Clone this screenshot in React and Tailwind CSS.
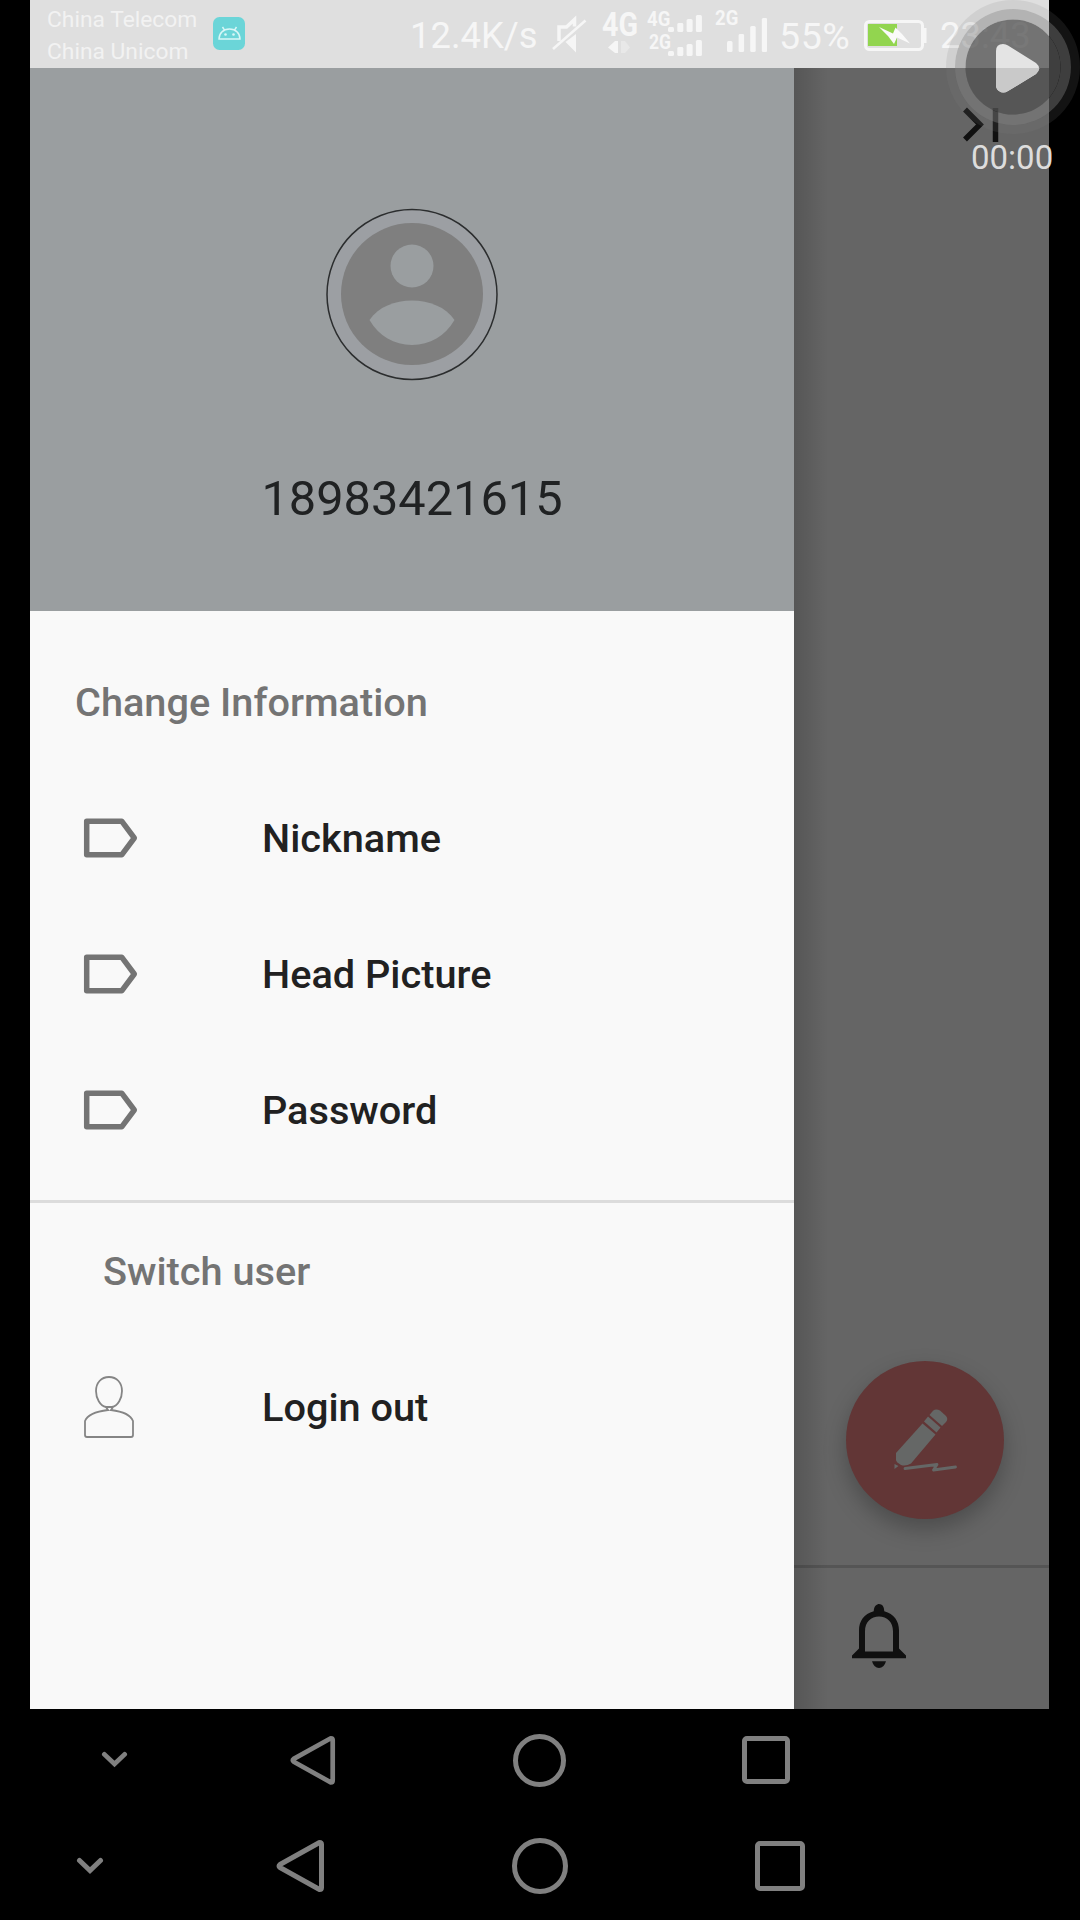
function SignalBars({ className, heights, barWidth, step, height }) {
  const width = step * (heights.length - 1) + barWidth;
  return (
    <svg className={className} width={width} height={height} viewBox={`0 0 ${width} ${height}`} fill="#f6f6f6">
      {heights.map((h, i) => (
        <rect key={i} x={i * step} y={height - h} width={barWidth} height={h} rx="1.5" />
      ))}
    </svg>
  );
}

function StatusBar() {
  return (
    <header className="flex h-[68px] shrink-0 items-start overflow-hidden bg-[#dfdfdf] whitespace-nowrap text-[#f6f6f6]">
      <div className="ml-[17px] w-[166px] shrink-0 pt-[4px] text-[22.800px] leading-[31.5px] text-[#f2f2f2]">
        <div>China Telecom</div>
        <div>China Unicom</div>
      </div>
      <svg className="mt-[17px] shrink-0" width="32" height="33" viewBox="0 0 32 33">
        <rect width="32" height="33" rx="6.5" fill="#6bd5d8" />
        <path d="M6 22c0-5.500 4-10 10.500-10s10.500 4.500 10.500 10zM11.500 13.200L9.500 10M21.500 13.200L23.500 10" fill="none" stroke="#d9f7f7" strokeWidth="1.500" />
        <circle cx="12.500" cy="17.500" r="1.300" fill="#d9f7f7" />
        <circle cx="20.500" cy="17.500" r="1.300" fill="#d9f7f7" />
      </svg>
      <div className="ml-[165px] w-[142px] shrink-0 pt-[15px] text-[36.400px] leading-[42px]">12.4K/s</div>
      <svg className="mt-[15px] shrink-0" width="36" height="38" viewBox="0 0 36 38">
        <path d="M7 26V12h7.500L22.500 4.500v7" fill="none" stroke="#f6f6f6" strokeWidth="3.500" />
        <path d="M13.500 27L24 19v18.500z" fill="#f6f6f6" />
        <path d="M1 34L33.500 5.500" stroke="#f6f6f6" strokeWidth="2.600" />
      </svg>
      <div className="ml-[14px] flex w-[44px] shrink-0 flex-col pt-[8px]">
        <span className="origin-left scale-x-[0.87] text-[33px] leading-[34px] font-bold">4G</span>
        <svg className="-mt-[2px] ml-[6px]" width="22" height="14" viewBox="0 0 22 14">
          <path d="M0 7.500L7 1h3v12H7z" fill="#f6f6f6" />
          <path d="M22 7.500L17 1h-4v12h4z" fill="#e8e8e8" />
        </svg>
      </div>
      <div className="flex w-[68px] shrink-0 flex-col pt-[9px]">
        <div className="flex h-[23px]">
          <span className="ml-[1px] w-[21px] origin-left scale-x-95 text-[19.500px] leading-[21px] font-bold">4G</span>
          <SignalBars className="mt-[6px]" heights={[5, 9, 13, 17]} barWidth={6} step={9.3} height={17} />
        </div>
        <div className="flex h-[24px]">
          <span className="ml-[3px] w-[19px] origin-left scale-x-90 text-[19.500px] leading-[21px] font-bold">2G</span>
          <SignalBars className="mt-[7px]" heights={[5, 9, 12, 16]} barWidth={6} step={9.3} height={17} />
        </div>
      </div>
      <div className="flex w-[64px] shrink-0 pt-[8px]">
        <span className="ml-[1px] w-[12px] origin-left scale-x-95 text-[19.500px] leading-[22px] font-bold">2G</span>
        <SignalBars className="mt-[10px]" heights={[11, 18, 26, 34]} barWidth={5.5} step={11.6} height={34} />
      </div>
      <div className="ml-[1px] w-[85px] shrink-0 pt-[15px] text-[37.500px] leading-[42px] tracking-[0.600px]">55%</div>
      <svg className="mt-[20px] shrink-0" width="63" height="31" viewBox="0 0 63 31">
        <rect x="1.500" y="1.500" width="57" height="28" rx="4" fill="none" stroke="#f6f6f6" strokeWidth="3" />
        <path d="M60 8h2.500v15H60z" fill="#f6f6f6" />
        <path d="M4 4h29v22H4z" fill="#92d54f" />
        <path d="M15 7l14 6.500 2.500-6L38 14l8 9.500-13-6-3 6.500-6-8z" fill="#fafafa" />
      </svg>
      <div className="ml-[13px] shrink-0 pt-[15px] text-[36.400px] leading-[42px]">23:43</div>
    </header>
  );
}

function Avatar() {
  return (
    <svg className="mt-[140px]" width="172" height="173" viewBox="0 0 172 173">
      <circle cx="86" cy="86.500" r="85" fill="#9c9fa3" stroke="#2b2d2e" strokeWidth="1.500" />
      <circle cx="86" cy="86" r="71" fill="#7f7f7f" />
      <circle cx="86" cy="58" r="21.500" fill="#9a9ea0" />
      <path d="M43.500 112C52 99 69 92.500 86 92.500s34 6.500 42.500 19.500C119 128 104 137 86 137s-33-9-42.500-25z" fill="#9a9ea0" />
    </svg>
  );
}

function LabelIcon() {
  return (
    <svg className="-mt-[3px]" width="56" height="40" viewBox="0 0 56 40">
      <path d="M3.700 3.200H38.700L51.300 20 38.700 36.800H3.700z" fill="none" stroke="#747474" strokeWidth="5.500" strokeLinejoin="round" />
    </svg>
  );
}

function UserIcon() {
  return (
    <svg className="-mt-[2px]" width="56" height="62" viewBox="0 0 56 62" fill="none" stroke="#858585" strokeWidth="1.800">
      <path d="M26 1c8 0 13 6 13 14 0 7-4 15-10 16h-6C17 30 13 22 13 15 13 7 18 1 26 1z" />
      <path d="M23 31l2 3c-8 1-20 3-23 11v14q0 2 2 2h44q2 0 2-2V45C47 37 36 35 28 34l2-3" />
    </svg>
  );
}

function MenuRow({ icon, label }) {
  return (
    <li className="flex h-[136px] items-center pl-[53px]">
      <span className="flex w-[179px]">{icon}</span>
      <span>{label}</span>
    </li>
  );
}

function Drawer() {
  return (
    <aside className="flex w-[764px] shrink-0 flex-col bg-[#f9f9f9] text-[39.700px] font-medium text-[#212121]">
      <div className="flex h-[543px] shrink-0 flex-col items-center bg-[#9a9ea0]">
        <Avatar />
        <div className="mt-[89px] text-[48.700px] leading-[58px] font-normal text-[#202223]">18983421615</div>
      </div>
      <h2 className="mt-[24px] flex h-[136px] items-center pl-[45px] text-[#747474]">Change Information</h2>
      <ul>
        <MenuRow icon={<LabelIcon />} label="Nickname" />
        <MenuRow icon={<LabelIcon />} label="Head Picture" />
        <MenuRow icon={<LabelIcon />} label="Password" />
      </ul>
      <hr className="mt-[21px] h-[3px] border-0 bg-[#dcdcdc]" />
      <h2 className="mt-[1px] flex h-[136px] items-center pl-[73px] text-[#747474]">Switch user</h2>
      <ul>
        <MenuRow icon={<UserIcon />} label="Login out" />
      </ul>
    </aside>
  );
}

function DimmedPage() {
  return (
    <section className="relative flex w-[255px] flex-col bg-[#656565]">
      <svg className="mt-[39px] ml-[169px]" width="36" height="35" viewBox="0 0 36 35" fill="none" stroke="#101010">
        <path d="M2 2.500L17 17.500 2 32.500" strokeWidth="5.500" />
        <path d="M32.500 1v34" strokeWidth="5.500" />
      </svg>
      <button className="mt-auto mb-[46px] ml-[51.500px] flex size-[158px] items-center justify-center rounded-full bg-[#623636] shadow-[0_10px_22px_rgba(0,0,0,0.25)]">
        <svg width="64" height="64" viewBox="0 0 64 64" fill="#656766">
          <path d="M29.500 15.500L42.500 26.500 18 55.500q-5 3-10 1.500Q3 54 3 52V45z" />
          <path d="M31 13.500l4-5 12.500 11-4 5z" />
          <path d="M36.500 7l3.500-4.200q3-2.600 7-.2l6 5.400q2.500 3 0 6l-4 4z" />
          <path d="M1.500 56l4 2-4 3z" />
          <path d="M12 60.500L44 56.500l-3.500 5.500 22-3" fill="none" stroke="#656766" strokeWidth="2.800" strokeLinecap="round" strokeLinejoin="round" />
        </svg>
      </button>
      <div className="h-[144px] shrink-0 border-t-[3px] border-[#555555]">
        <svg className="mt-[35px] ml-[57px]" width="56" height="66" viewBox="0 0 56 68" preserveAspectRatio="none" fill="#101010">
          <path fillRule="evenodd" d="M28 1q5 0 5.300 7.500C43 11 48 19 48 28v19l7 7v3H1v-3l7-7V28C8 19 13 11 22.700 8.500 23 1 28 1 28 1zM14 50h28V29C42 20 36 14 28 14s-14 6-14 15z" />
          <path d="M21 60h14q-2 7-7 7t-7-7z" />
        </svg>
      </div>
      <div className="pointer-events-none absolute inset-y-0 left-0 w-[34px] bg-gradient-to-r from-black/15 to-transparent" />
    </section>
  );
}

function RecorderBubble() {
  return (
    <div className="absolute top-0 left-[946px] w-[134px] overflow-hidden">
      <svg width="134" height="136" viewBox="0 0 134 136">
        <path fillRule="evenodd" fill="#7f7f7f" fillOpacity=".15" d="M67 0a67 67 0 1 0 0 134 67 67 0 1 0 0-134zM67 9a58 58 0 1 1 0 116 58 58 0 1 1 0-116z" />
        <path fillRule="evenodd" fill="#828282" fillOpacity=".475" d="M67 9a58 58 0 1 0 0 116 58 58 0 1 0 0-116zM67 19.500a47.500 47.500 0 1 1 0 95 47.500 47.500 0 1 1 0-95z" />
        <circle cx="67" cy="67" r="47.500" fill="#525252" fillOpacity=".77" />
        <path d="M50 51q0-7 7-7 3 0 5 1.500L90 63q6 5 0 11L62 91q-5 3-9 0-3-2-3-6z" fill="#e4e4e4" />
        <path d="M50 68h43.500q-.5 3-3.500 6L62 91q-5 3-9 0-3-2-3-6z" fill="#c9c9c9" />
      </svg>
    </div>
  );
}

function NavBar({ lower }) {
  return (
    <nav className={lower ? "flex h-[109px] items-center pl-[76px]" : "flex h-[102px] items-center pl-[101px]"}>
      <svg className={lower ? "w-[28px]" : "w-[27px]"} viewBox="0 0 28 18" fill="none" stroke="#808080" strokeWidth="5" strokeLinecap="round">
        <path d="M3.500 3.500L14 13.500 24.500 3.500" />
      </svg>
      <svg className={lower ? "ml-[171px] w-[50px]" : "ml-[161px] w-[47px]"} viewBox="0 0 50 56" fill="none" stroke="#808080" strokeWidth="5" strokeLinejoin="round">
        <path d="M44.500 4.500q2 0 2 2v43q0 2-2 2L5 29.500q-2-1.500 0-3z" />
      </svg>
      <div className={lower ? "ml-[187px] size-[56px] rounded-full border-[5px] border-[#808080]" : "ml-[177px] size-[53px] rounded-full border-[5px] border-[#808080]"} />
      <div className={lower ? "ml-[187px] size-[50px] rounded-[5px] border-[5px] border-[#808080]" : "ml-[176px] size-[48px] rounded-[5px] border-[5px] border-[#808080]"} />
    </nav>
  );
}

export default function App() {
  return (
    <div className="relative h-[1920px] w-[1080px] overflow-hidden bg-black font-['Roboto',sans-serif]">
      <main className="mx-[30px] flex h-[1709px] w-[1019px] flex-col">
        <StatusBar />
        <div className="flex min-h-0 flex-1">
          <Drawer />
          <DimmedPage />
        </div>
      </main>
      <NavBar />
      <NavBar lower />
      <RecorderBubble />
      <div className="absolute top-[138px] left-[971px] text-[33px] leading-[39px] text-[#dddddd]">00:00</div>
    </div>
  );
}
